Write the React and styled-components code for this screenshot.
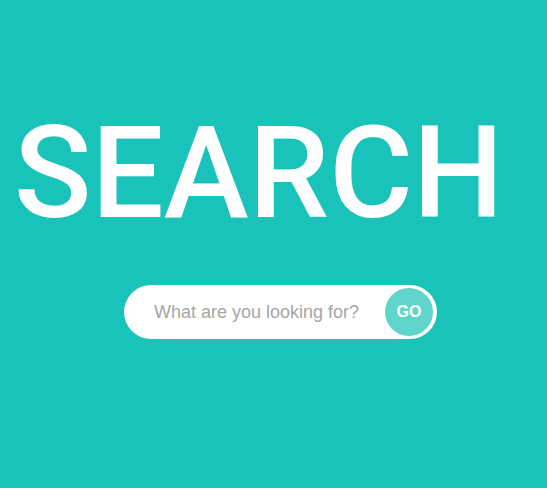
import React from "react";
import styled, { createGlobalStyle } from "styled-components";

const GlobalStyle = createGlobalStyle`
  html, body {
    margin: 0;
    padding: 0;
    background: #ffffff;
  }
`;

const Hero = styled.div`
  height: 488px;
  background: #19c3b9;
  display: flex;
  flex-direction: column;
  align-items: flex-start;
  padding-top: 109px;
  box-sizing: border-box;
  font-family: "Liberation Sans", Arial, sans-serif;
`;

const Title = styled.h1`
  margin: 0 0 0 14px;
  font-family: Roboto, "Liberation Sans", Arial, sans-serif;
  font-size: 128px;
  line-height: 128px;
  font-weight: 500;
  color: #ffffff;
  letter-spacing: 0;
`;

const SearchBar = styled.form`
  margin: 48px 0 0 124px;
  width: 313px;
  height: 54px;
  box-sizing: border-box;
  background: #ffffff;
  border-radius: 27px;
  display: flex;
  align-items: center;
  padding: 0 4px 0 30px;
`;

const Field = styled.input`
  flex: 1;
  min-width: 0;
  border: none;
  outline: none;
  background: transparent;
  font-family: "Liberation Sans", Arial, sans-serif;
  font-size: 18px;
  color: #555;
  caret-color: #19c3b9;
  padding: 0;

  &::placeholder {
    color: #a6a6a6;
  }
`;

const GoButton = styled.button`
  width: 48px;
  height: 48px;
  flex: none;
  border: none;
  border-radius: 50%;
  background: #5fd5cb;
  color: #ffffff;
  font-family: "Liberation Sans", Arial, sans-serif;
  font-size: 16px;
  font-weight: 700;
  padding: 0;
  cursor: pointer;
`;

export default function App() {
  return (
    <>
      <GlobalStyle />
      <Hero>
        <Title>SEARCH</Title>
        <SearchBar onSubmit={(e) => e.preventDefault()}>
          <Field placeholder="What are you looking for?" autoFocus />
          <GoButton type="submit">GO</GoButton>
        </SearchBar>
      </Hero>
    </>
  );
}
